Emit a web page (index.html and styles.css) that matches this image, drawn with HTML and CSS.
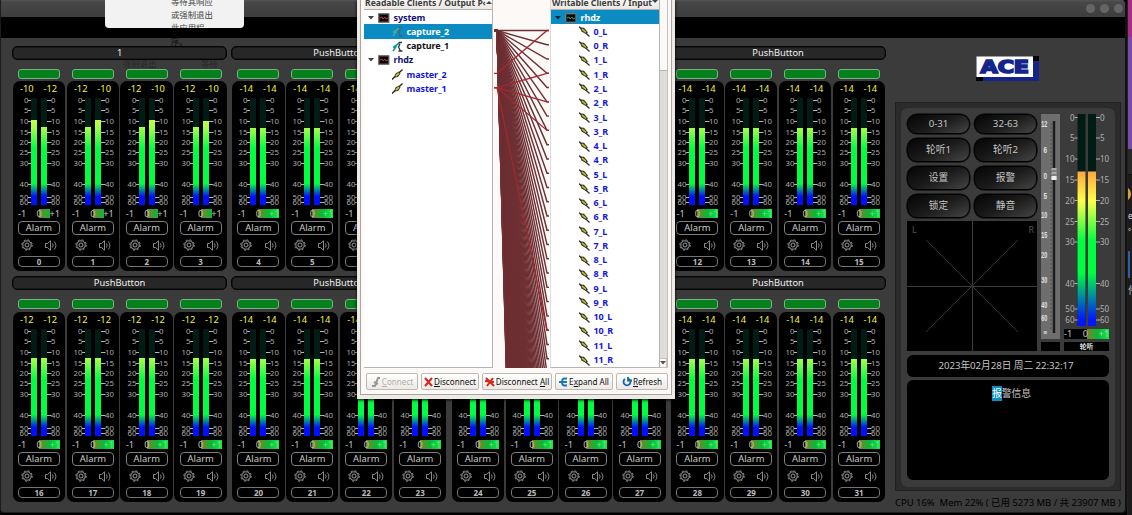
FILE: index.html
```html
<!DOCTYPE html>
<html lang="zh">
<head>
<meta charset="utf-8">
<title>Audio monitor</title>
<link rel="stylesheet" href="styles.css">
</head>
<body>
<div class="desktop">
  <div class="dock"><i class="dock-pink"></i><i class="dock-violet"></i><i class="dock-line"></i><i class="dock-dot"></i><span class="dock-text">e<br>。</span><i class="dock-blue"></i><span class="dock-file">件</span></div>

  <main class="window">
    <header class="titlebar"><i></i><i></i><i></i></header>
    <div class="menubar"></div>
    <div class="content">
      <section class="banks" id="banks"></section>
      <aside class="side">
        <svg class="logo" width="64" height="26" viewBox="0 0 64 26">
          <path fill="#14248a" d="M0 4H63V25H0z"/><path fill="#000" d="M57 0H63V5H57zM0 21H7V25H0z"/><path fill="#fff" d="M.5 .5H57V21H.5z"/>
          <text x="4.500" y="16.800" textLength="48.500" lengthAdjust="spacingAndGlyphs">ACE</text>
        </svg>
        <div class="frame">
          <div class="panel">
            <div class="upper">
              <div class="left">
                <div class="keys">
                  <button>0-31</button><button>32-63</button>
                  <button>轮听1</button><button>轮听2</button>
                  <button>设置</button><button>报警</button>
                  <button>锁定</button><button>静音</button>
                </div>
                <svg class="scope" width="130" height="130" viewBox="0 0 130 130">
                  <path stroke="#3c3c3c" d="M65.500 0V130M0 65.500H130"/>
                  <path stroke="#3a3a3a" stroke-width=".9" d="M19 19L111 111M111 19L19 111"/>
                  <text x="5" y="12">L</text><text x="121.500" y="12">R</text>
                </svg>
              </div>
              <div class="fader-col">
                <svg id="fader" class="fader" width="19" height="225" viewBox="0 0 19 225"></svg>
                <div class="blank"></div>
              </div>
              <div class="master">
                <svg id="master" class="scale big" width="45" height="215" viewBox="0 0 45 215"></svg>
                <div class="phase big-phase"><span>-1</span><span>0</span><span>+1</span></div>
                <div class="listen">轮听</div>
              </div>
            </div>
            <div class="clock">2023年02月28日 周二 22:32:17</div>
            <div class="info"><p><mark>报</mark>警信息</p></div>
          </div>
        </div>
        <div class="status">CPU 16%&nbsp; Mem 22% ( 已用 5273 MB / 共 23907 MB )</div>
      </aside>
    </div>
  </main>

  <div class="notice"><p>等待其响应<br>或强制退出<br>此应用程</p></div>
  <div class="ghost ghost-end">序。</div>
  <div class="ghost ghost-quit">强制退出</div>
  <div class="ghost ghost-wait">等待</div>

  <div class="dialog">
    <div class="dialog-in">
      <div class="lists">
        <div class="tree outputs">
          <div class="tree-head"><span>Readable Clients / Output P‹</span><svg width="6" height="4"><path d="M0 4L3 1L6 4z"/></svg></div>
          <div id="outs"></div>
        </div>
        <svg id="wires" class="wires" width="58" height="368" viewBox="493 0 58 368"></svg>
        <div class="tree inputs">
          <div class="tree-head"><span>Writable Clients / Input</span><svg width="6" height="4"><path d="M0 0L3 3L6 0z"/></svg></div>
          <div id="ins"></div>
        </div>
        <div class="scroll"><i></i><b><svg width="6" height="4"><path d="M0 0L3 3.500L6 0z"/></svg></b></div>
      </div>
      <div class="actions">
        <button class="off b1"><svg width="10" height="10"><path d="M1 9H4L7 1H9M3 5L7 7" stroke="#999" stroke-width="2" fill="none"/></svg><span><u>C</u>onnect</span></button>
        <button class="b2"><svg width="9" height="10"><path d="M1 1L8 9M8 1L1 9" stroke="#d5281b" stroke-width="2"/></svg><span><u>D</u>isconnect</span></button>
        <button class="b3"><svg width="10" height="10"><path d="M1 1L9 9M8 1L2 9M0 4L9 5" stroke="#d5281b" stroke-width="2"/></svg><span>Disconnect <u>A</u>ll</span></button>
        <button class="b4"><svg width="9" height="10"><path d="M8 1.500H5Q3 2 3 5Q3 8 5 8.500H8M0 5H8" stroke="#1879b8" stroke-width="1.900" fill="none"/></svg><span>E<u>x</u>pand All</span></button>
        <button class="b5"><svg width="10" height="10"><path d="M3 2A3.500 3.500 0 1 0 7 2M6 0V3.500H10" stroke="#0f66ad" stroke-width="1.800" fill="none"/></svg><span><u>R</u>efresh</span></button>
      </div>
    </div>
  </div>
</div>
<script src="app.js"></script>
</body>
</html>
```

FILE: styles.css
```css
* { box-sizing: border-box; }
body { margin: 0; overflow: hidden; background: #000; font-family: "Noto Sans", "Noto Sans CJK SC", sans-serif; color: #c4c4c4; }
button { font: inherit; color: inherit; padding: 0; margin: 0; }
.desktop { position: relative; width: 1132px; height: 515px; background: #000; overflow: hidden; }

.dock { position: absolute; left: 1127px; top: 0; width: 5px; height: 515px; background: #1d1b1b; display: flex; flex-direction: column; overflow: hidden; border-left: 1px solid #222; }
.dock-pink { height: 37px; background: #a62c85; }
.dock-violet { height: 112px; background: #7a4ba6; }
.dock-line { height: 26px; background: #2a2929; border-bottom: 1px solid #111; }
.dock-dot { width: 13px; height: 14px; margin: 12px 0 0 -10px; border-radius: 50%; background: #dca038; }
.dock-text { font-size: 8px; line-height: 11px; margin-top: 9px; height: 26px; color: #ddd; }
.dock-blue { width: 2px; height: 27px; margin-top: 15px; background: #2f5ca6; }
.dock-file { font-size: 10px; line-height: 14px; margin-top: 5px; color: #bbb; }

.window { width: 1127px; height: 513px; background: #3b3b3b; border-left: 1px solid #1b1b1b; border-right: 2px solid #111; border-bottom: 1px solid #1e1e1e; border-radius: 0 5px 5px 4px; overflow: hidden; }
.titlebar { height: 17px; background: linear-gradient(#555 0, #474747 2px, #3d3d3d); display: flex; justify-content: flex-end; align-items: center; gap: 5px; padding-right: 2px; }
.titlebar i { width: 9px; height: 9px; border-radius: 50%; background: #656565; }
.menubar { height: 21px; background: #000; }
.content { display: flex; height: 475px; }

.banks { width: 885px; padding: 7.500px 0 0 11px; display: flex; flex-direction: column; gap: 4.500px; flex: none; }
.bank-row { display: flex; gap: 4.300px; height: 226px; }
.bank { width: 215.200px; flex: none; }
.bank-title { height: 14px; border: 1px solid #050505; box-shadow: inset 0 0 0 .5px #0a0a0a; border-radius: 5px; background: #272727; text-align: center; font-size: 9.300px; line-height: 12px; color: #f0f0f0; }
.strips { display: flex; gap: 1.500px; padding: 9.500px 0 0 .7px; }
.bank-row + .bank-row .strips { padding-top: 9px; }
.bank-row + .bank-row .lamp { margin-bottom: 3px; }
.strip { width: 52.400px; }
.lamp { height: 10px; width: 42px; margin: 0 auto 2px 5.300px; border: 1px solid #76b583; border-radius: 3px; background: #067f1d; }
.body { height: 190px; background: #000; border-radius: 7px; padding: 2px 5px 0 5.300px; }
.vals { display: flex; justify-content: space-between; font-size: 9.300px; line-height: 12.500px; height: 14px; color: #f4f43e; padding: 0 3px 0 2px; }
.scale { display: block; overflow: visible; }
.scale text { font-family: "Noto Sans", sans-serif; fill: #acacac; font-size: 7.800px; }
.scale path { stroke: #b4b4b4; stroke-width: 1.100; fill: none; }
.phase { display: flex; justify-content: space-between; width: 42px; height: 9px; margin-top: 4px; font-size: 9.200px; line-height: 10px; color: #c0c0c0; background: linear-gradient(90deg, #7d8028, #08b936 50%, #08ef45) no-repeat 21px 0 / 21px 9px; }
.phase.half { background: linear-gradient(90deg, #7d8028, #08b936) no-repeat 21px 0 / 11px 9px; }
.phase:not(.half):not(.big-phase) span:last-child { color: #8fd08f; }
.alarm { height: 14px; width: 42px; margin-top: 3px; border: 1px solid #7e7e7e; border-radius: 4px; text-align: center; font-size: 9.400px; line-height: 12.500px; color: #cacaca; }
.icons { display: flex; justify-content: space-between; align-items: center; padding: 0 3px; margin-top: 4px; height: 12px; }
.icons svg { display: block; fill: none; stroke: #9a9a9a; }
.num { width: 42px; height: 11px; margin-top: 5px; border: 1px solid #747474; border-radius: 4px; text-align: center; font-size: 8px; font-weight: bold; line-height: 9px; color: #bcbcbc; }

.side { padding: 18px 0 0 9px; width: 236px; flex: none; }
.logo { display: block; margin-left: 81px; height: 26px; }
.logo text { font: bold 17px "DejaVu Sans", sans-serif; fill: #14248a; stroke: #14248a; stroke-width: 1.700; }
.frame { width: 226px; height: 389px; margin-top: 20px; border: 1px solid #202020; background: #2b2b2b; padding: 5px; }
.panel { width: 214px; height: 379px; border-radius: 7px; background: #3b3b3b; padding: 6px; }
.upper { display: flex; gap: 4px; height: 237px; }
.left { width: 130px; }
.keys { display: grid; grid-template-columns: 63px 63px; gap: 4px; grid-template-rows: 20px 24px 24px 24px; height: 107px; }
.keys button { border: 1.500px solid #000; border-radius: 10px; background: linear-gradient(155deg, #050505, #1b1b1b 50%, #454545); font-size: 9.700px; line-height: 1; color: #c4c4c4; box-shadow: 0 0 0 .5px #000; }
.scope { display: block; background: #000; }
.scope text { font-size: 9px; fill: #555; }
.fader-col { width: 19px; display: flex; flex-direction: column; gap: 3px; }
.fader { background: #6e6e6e; display: block; }
.fader text { font: bold 8.500px "Liberation Sans", sans-serif; fill: #e2e2e2; }
.blank { height: 9px; background: #000; }
.master { width: 45px; }
.big text { font-size: 8px; fill: #b0b0b0; }
.big-phase { width: 45px; margin-top: 0; height: 10px; background: linear-gradient(90deg, #7d8028, #08b936 50%, #08ef45) no-repeat 23px 0 / 22px 10px #000; }
.listen { height: 9px; margin-top: 3px; background: #000; color: #ddd; font-size: 6.800px; font-weight: bold; text-align: center; line-height: 9px; }
.clock { margin-top: 4px; height: 22px; border-radius: 6px; background: #000; text-align: center; font-size: 9.700px; line-height: 22.500px; letter-spacing: -.05px; padding-right: 4px; }
.info { margin-top: 3px; height: 100px; border-radius: 6px; background: #000; padding: 6px; }
.info p { margin: 0; text-align: center; padding-left: 7px; font-size: 9.800px; line-height: 15px; }
.info mark { background: #0d8cc2; color: #fff; display: inline-block; height: 15px; }
.status { margin-top: 4px; font-size: 9.450px; line-height: 16px; color: #000; white-space: nowrap; }

.notice { position: absolute; left: 105px; top: 0; width: 139px; height: 28px; border-radius: 0 0 4px 4px; background: #f2f2f2; color: #444; overflow: hidden; }
.notice p { margin: -5px 0 0 66px; font-size: 8.400px; line-height: 13px; font-family: "Noto Sans CJK SC", sans-serif; }
.ghost { position: absolute; font-size: 8.300px; line-height: 13px; color: #262626; font-family: "Noto Sans CJK SC", sans-serif; white-space: nowrap; }
.ghost-end { left: 171px; top: 35px; color: #101010; }
.ghost-quit { left: 123px; top: 57px; }
.ghost-wait { left: 201px; top: 57px; }

.dialog { position: absolute; left: 357px; top: 0; width: 318px; height: 399px; background: #eeeae7; padding: 0 3px 4px; box-shadow: 0 1px 3px #000; }
.dialog-in { height: 395px; width: 312px; background: #fcf9f7; border: 1px solid #aaa5a2; border-top: 0; padding: 0 3px; display: flex; flex-direction: column; }
.lists { display: flex; height: 368px; }
.tree { background: #fff; border-bottom: 1px solid #b5b5b5; border-right: 1px solid #b5b5b5; overflow: hidden; flex: none; }
.outputs { width: 129px; }
.inputs { width: 110px; border-left: 1px solid #ddd; margin-left: -1px; }
.tree-head { height: 10px; background: linear-gradient(#f8f6f4, #eae7e4); border-bottom: 1px solid #b5b0ac; display: flex; justify-content: space-between; font-size: 8.600px; font-weight: bold; line-height: 12px; color: #3d3d3d; padding: 0 4px 0 1px; white-space: nowrap; }
.tree-head span { margin-top: -3.500px; }
.tree-head svg { fill: #444; flex: none; }
.row { display: flex; align-items: center; height: 14.270px; font-size: 9px; font-weight: bold; line-height: 14px; letter-spacing: -.1px; white-space: nowrap; padding-top: 1px; }
.row svg { display: block; flex: none; }
.row.client { color: #10107c; padding-left: 4px; }
.row.port { color: #1616e0; padding-left: 28px; }
.row.black { color: #111; }
.row.sel { background: #0a8cc2; color: #fff; }
.row .arrow { margin-right: 4px; }
.row .term { margin-right: 3.500px; }
.row .plug { margin-right: 3.500px; }
.wires { display: block; flex: none; }
.scroll { width: 9px; background: #dfddda; border-right: 1px solid #c5c0bd; display: flex; flex-direction: column; justify-content: space-between; height: 368px; }
.scroll i { height: 71px; background: #fbf9f8; border-bottom: 1px solid #b9b5b1; }
.scroll b { height: 10px; background: #faf8f6; border: 1px solid #c6c2be; border-left: 0; display: grid; place-items: center; }
.scroll svg { fill: #555; }
.actions { display: flex; gap: 3px; padding: 5px 0 0 2px; }
.actions button { height: 17px; flex: none; display: flex; align-items: center; justify-content: center; gap: 1px; font-size: 8.100px; border: 1px solid #bdb8b4; border-radius: 2px; background: linear-gradient(#fff, #ece9e6); color: #111; white-space: nowrap; }
.actions .off { color: #b2aeab; }
.b1 { width: 52px; } .b2 { width: 58px; } .b3 { width: 70px; } .b4 { width: 58px; } .b5 { width: 52px; }
```

FILE: app.js
```js
const MARKS = [['0', 0], ['5', 10.5], ['10', 21], ['15', 32], ['20', 42], ['25', 52.5], ['30', 63], ['40', 84.5], ['50', 97.5], ['60', 102.3]];

const defs = `<svg width="0" height="0" style="position:absolute"><defs>
<linearGradient id="lvl" gradientUnits="userSpaceOnUse" x1="0" y1="1" x2="0" y2="108">
<stop offset=".2" stop-color="#c8ff48"/><stop offset=".28" stop-color="#a4ff48"/><stop offset=".47" stop-color="#00ff40"/><stop offset=".8" stop-color="#00ff40"/><stop offset=".92" stop-color="#0010ff"/></linearGradient>
<linearGradient id="mst" gradientUnits="userSpaceOnUse" x1="0" y1="0" x2="0" y2="212">
<stop offset=".27" stop-color="#ffa63a"/><stop offset=".41" stop-color="#ffff4a"/><stop offset=".6" stop-color="#00ff40"/><stop offset=".75" stop-color="#00ff40"/><stop offset=".97" stop-color="#0018ff"/></linearGradient>
</defs></svg>`;
document.body.insertAdjacentHTML('beforeend', defs);

function meter(l, r) {
  let s = '<svg class="scale" width="42" height="108" viewBox="0 0 42 108">';
  s += '<path style="stroke:none;fill:#001c14" d="M13 1h6v107h-6zM23 1h6v107h-6z"/>';
  s += `<path style="stroke:none;fill:url(#lvl)" d="M13 ${l}h6V108h-6zM23 ${r}h6V108h-6z"/>`;
  for (const [t, y] of MARKS) {
    const yy = Math.round(y + 2.5) + 0.5;
    s += `<path d="M10 ${yy}h3M29 ${yy}h4.500"/><text x="10.500" y="${yy + 2.6}" text-anchor="end">${t}</text><text x="33" y="${yy + 2.6}">${t}</text>`;
  }
  return s + '</svg>';
}

const gear = '<svg width="12" height="12" viewBox="0 0 12 12"><circle cx="6" cy="6" r="2"/><circle cx="6" cy="6" r="4.200"/><circle cx="6" cy="6" r="5.200" stroke-dasharray="2 2.080"/></svg>';
const horn = '<svg width="12" height="11" viewBox="0 0 12 11"><path d="M.5 3.500H2.500L5.500 .8V10.200L2.500 7.500H.5zM7.500 3.500Q8.700 5.500 7.500 7.500M9.300 1.500Q12.500 5.500 9.300 9.500" stroke-width=".9"/></svg>';

function strip(n) {
  let v = n % 16 < 4 ? ['-12', '-12'] : ['-14', '-14'];
  let y = n % 16 < 4 ? [30, 30] : [31, 31];
  if (n === 0) { v = ['-10', '-12']; y = [23, 30]; }
  if (n > 0 && n < 4) { v = ['-12', '-10']; y = [30, n === 3 ? 24 : 23]; }
  return `<div class="strip"><div class="lamp"></div><div class="body">
<div class="vals"><span>${v[0]}</span><span>${v[1]}</span></div>${meter(...y)}
<div class="phase${n < 4 ? ' half' : ''}"><span>-1</span><span>&nbsp;0</span><span>+1</span></div>
<div class="alarm">Alarm</div><div class="icons">${gear}${horn}</div><div class="num">${n}</div></div></div>`;
}

let html = '';
for (let r = 0; r < 2; r++) {
  html += '<div class="bank-row">';
  for (let g = 0; g < 4; g++) {
    html += `<div class="bank"><div class="bank-title">${r + g === 0 ? '1' : 'PushButton'}</div><div class="strips">`;
    for (let c = 0; c < 4; c++) html += strip(r * 16 + g * 4 + c);
    html += '</div></div>';
  }
  html += '</div>';
}
document.getElementById('banks').innerHTML = html;

const big = [['0', 3.5], ['5', 24], ['10', 45], ['15', 66], ['20', 86.5], ['25', 107.5], ['30', 128], ['40', 169.5], ['50', 195], ['60', 206]];
let m = '<path style="stroke:none;fill:#001c14" d="M13.500 0h8v212h-8zM24 0h8v212h-8z"/><path style="stroke:none;fill:url(#mst)" d="M13.500 57.500h8V212h-8zM24 57.500h8V212h-8z"/>';
for (const [t, y] of big) m += `<path d="M10.500 ${y}h3M32 ${y}h4"/><text x="10.500" y="${y + 3}" text-anchor="end">${t}</text><text x="36" y="${y + 3}">${t}</text>`;
document.getElementById('master').innerHTML = m;

let f = '<path d="M13 7V219" stroke="#1c1c1c" stroke-width="2.500"/>';
for (let y = 10; y < 218; y += 4) f += `<path d="M9 ${y}h2" stroke="#444" stroke-width=".7"/>`;
for (const [t, y] of [['12', 10.5], ['6', 36.5], ['0', 62], ['5', 82.5], ['10', 101.5], ['15', 121.5], ['20', 141], ['30', 166], ['40', 191], ['60', 204], ['∞', 218.5]])
  f += `<text x="${t.length > 1 ? 0.3 : 2.5}" y="${y + 2.5}" textLength="${t.length > 1 ? 6 : 3.5}" lengthAdjust="spacingAndGlyphs">${t}</text>`;
f += '<path d="M10.500 54h5v12h-5z" fill="#aaa"/><path d="M10.500 57h5M10.500 61h5" stroke="#555"/><path d="M10.500 62h5v4h-5z" fill="#eee"/>';
document.getElementById('fader').innerHTML = f;

const arrow = fill => `<svg class="arrow" width="6" height="4"><path d="M0 0H6L3 3.500z" fill="${fill}"/></svg>`;
const term = wave => `<svg class="term" width="12" height="10"><path d="M.5 .5H11V9.500H.5z" fill="#333" stroke="#777"/><path d="M2 2H10V8H2z" fill="#080808"/><path d="M2 5L4 4L5 6L7 4L8 6L10 5" fill="none" stroke="${wave}" stroke-width=".9"/></svg>`;
const plugOut = '<svg class="plug" width="11" height="11"><path d="M0 10.500L10.500 .5" stroke="#222" stroke-width="1.300"/><path d="M2 8.500L3.500 4.500L7 2.500L8.500 4.500L6 8z" fill="#33331c"/><path d="M3.800 7L7 4.200" stroke="#c6c637" stroke-width="1.700"/></svg>';
const plugIn = '<svg class="plug" width="11" height="11"><path d="M0 .5L10.500 10.500" stroke="#333" stroke-width="1.300"/><path d="M1 1.500L5 1.800L9 6.500L6.500 7.800L2.500 5.500z" fill="#33331c"/><path d="M3 3L7 6.300" stroke="#b6b637" stroke-width="1.700"/></svg>';
const mic = (a, b) => `<svg class="plug" width="11" height="11"><path d="M1 6.500L7.500 2M4.500 5L1 10" stroke="${a}" stroke-width="1.600"/><path d="M6.500 1.500H10M8 3L6.500 6L8.500 10M6.500 10H10.500" stroke="${b}" stroke-width="1.300" fill="none"/></svg>`;
document.getElementById('outs').innerHTML =
  `<div class="row client">${arrow('#444')}${term('#d33')}system</div>
<div class="row port sel">${mic('#3fa9a8', '#4c6068')}capture_2</div>
<div class="row port black">${mic('#159a9a', '#333')}capture_1</div>
<div class="row client">${arrow('#444')}${term('#d33')}rhdz</div>
<div class="row port">${plugOut}master_2</div><div class="row port">${plugOut}master_1</div>`;
let ins = `<div class="row client sel">${arrow('#123')}${term('#3a8')}rhdz</div>`;
for (let i = 0; i < 24; i++) ins += `<div class="row port">${plugIn}${i >> 1}_${i % 2 ? 'R' : 'L'}</div>`;
document.getElementById('ins').innerHTML = ins;

const port = i => 30.5 + 14.27 * i;
let w = '';
for (let i = 0; i < 128; i++) w += `<path d="M494 30.500H497L547 ${port(i)}H549" fill="none" stroke="#6e3034" stroke-width="1.450"/>`;
for (const [y, i] of [[73.3, 0], [87.6, 3], [87.6, 5], [87.6, 7], [87.6, 21]]) w += `<path d="M494 ${y}H497L547 ${port(i)}H549" fill="none" stroke="#9f2a30" stroke-width="1.300"/>`;
document.getElementById('wires').innerHTML = w;
```
